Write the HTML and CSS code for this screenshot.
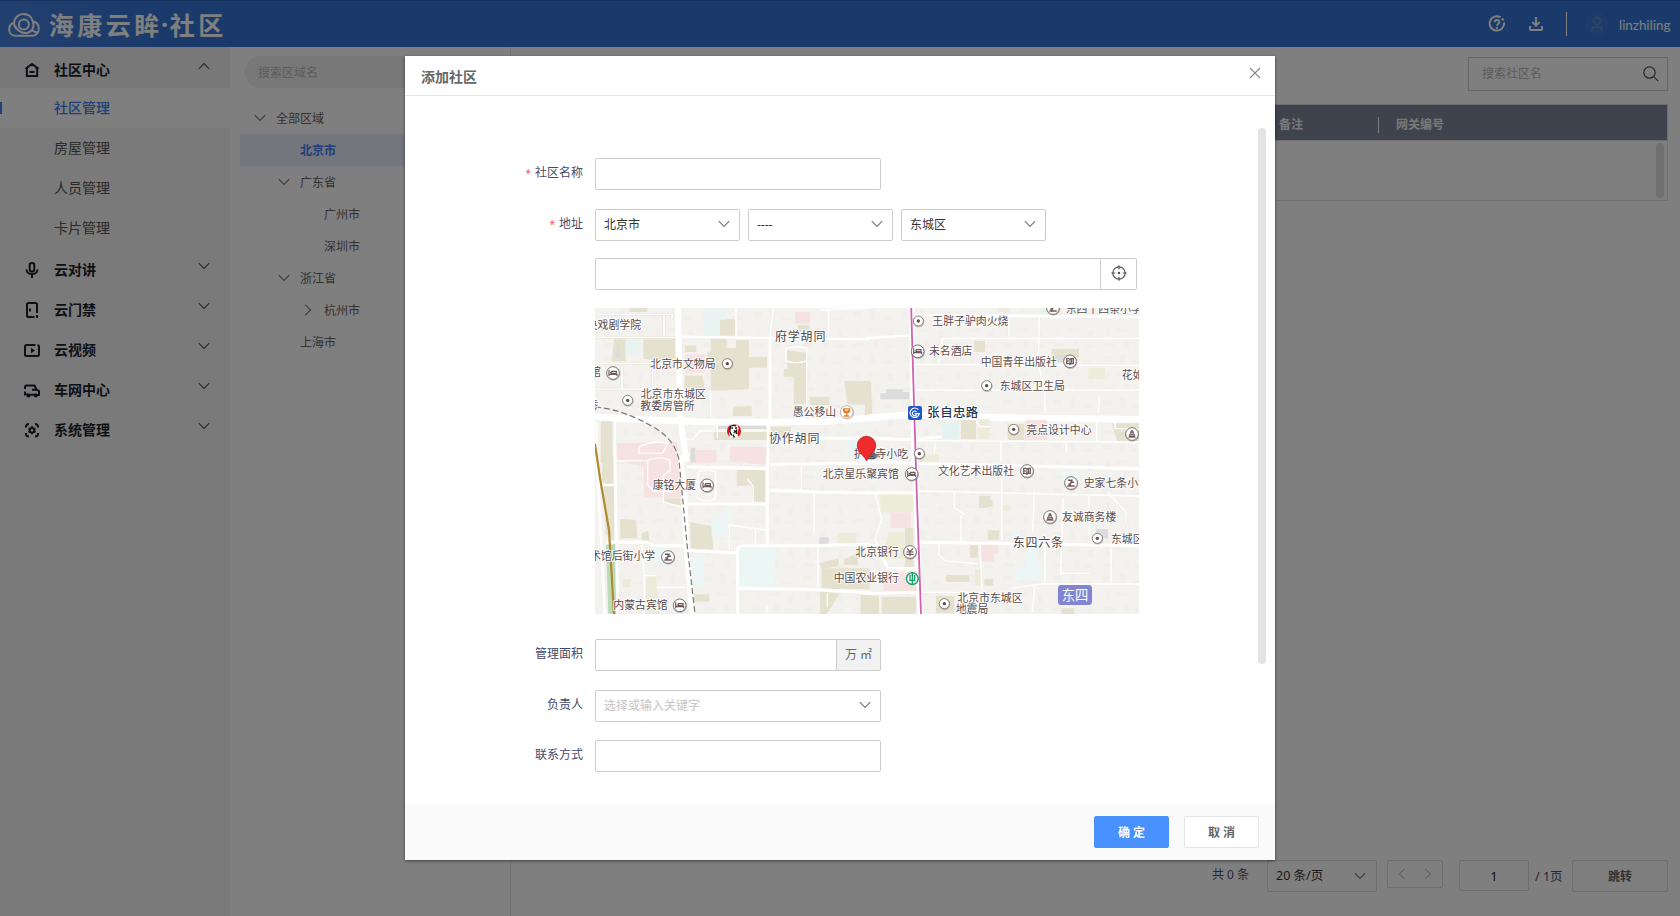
FILE: index.html
```html
<!DOCTYPE html>
<html lang="zh-CN">
<head>
<meta charset="utf-8">
<title>海康云眸·社区</title>
<link rel="stylesheet" href="styles.css">
</head>
<body>
<svg width="0" height="0" class="defs">
  <defs>
    <symbol id="down" viewBox="0 0 12 8"><path d="M.8 1.2 6 6.4l5.2-5.2" fill="none" stroke="currentColor" stroke-width="1.100"/></symbol>
    <symbol id="up" viewBox="0 0 12 8"><path d="M.8 6.8 6 1.6l5.2 5.2" fill="none" stroke="currentColor" stroke-width="1.100"/></symbol>
    <symbol id="right" viewBox="0 0 8 12"><path d="M1.2.8 6.6 6l-5.4 5.2" fill="none" stroke="currentColor" stroke-width="1.100"/></symbol>
    <symbol id="left" viewBox="0 0 8 12"><path d="M6.8.8 1.4 6l5.4 5.2" fill="none" stroke="currentColor" stroke-width="1.100"/></symbol>
  </defs>
</svg>
<div class="app">
  <header class="topbar">
    <div class="brand">
      <svg class="cloud" width="32" height="24" viewBox="0 0 32 24" fill="none" stroke="#fff" stroke-width="2">
        <path d="M7 22.700C3.500 22.700 1.200 20 1.200 16.500 1.200 12.500 3.500 10.500 6 9.800 6.500 4.500 10.500 1.100 15.500 1.100c4.500 0 8 2.700 9.300 7.100 3.800.8 6 3.600 6 7.300 0 4-2.500 7.200-6.300 7.200z"/>
        <circle cx="15.800" cy="11.500" r="5"/>
        <path d="M6 9.800c-.3 4 2.500 6 6 8.600 5 3.300 11.300 1.500 13-3.400.8-2.300.6-4.600-.2-6.800M29.500 19.500q-3.500-.5-5.500-2.500"/>
      </svg>
      <div class="name"><b>海</b><b>康</b><b>云</b><b>眸</b><b class="dot">·</b><b>社</b><b>区</b></div>
    </div>
    <div class="tools">
      <svg width="18" height="18" viewBox="0 0 18 18" fill="none" stroke="#fff" stroke-width="2"><path d="M12.500 2.200A7.200 7.200 0 1 0 16 7.500M14 3.300l1.500 2"/><path d="M6.700 7.200c0-3 4.600-3 4.600 0 0 1.700-2.300 1.600-2.300 3.500M9 12v1.700"/></svg>
      <svg class="dl" width="16" height="16" viewBox="0 0 16 16" fill="none" stroke="#fff" stroke-width="2"><path d="M8 1v8.500M4.300 6 8 9.700 11.700 6M2 10v3q0 1 1 1h10q1 0 1-1v-3"/></svg>
      <i class="rule"></i>
      <span class="avatar"><svg width="14" height="16" viewBox="0 0 14 16" fill="none" stroke="#5f86c4" stroke-width="2"><circle cx="7" cy="5" r="3.400"/><path d="M2 15v-2.500L3.500 11h7l1.500 1.500V15"/></svg></span>
      <span class="user">linzhiling</span>
    </div>
  </header>
  <div class="main">
    <nav class="side">
      <div class="group first"><svg class="ico" viewBox="0 0 16 16"><path d="M4 6.500h-1.200V14h10.400V6.500h-1.500M1.500 6.800 8 2l6.500 4.800M5.500 10h5"/></svg><span>社区中心</span><svg class="chev"><use href="#up"/></svg></div>
      <div class="item active">社区管理</div>
      <div class="item">房屋管理</div>
      <div class="item">人员管理</div>
      <div class="item last">卡片管理</div>
      <div class="group"><svg class="ico" viewBox="0 0 16 16"><rect x="5.700" y="1" width="4.600" height="8.500" rx="2.300"/><path d="M2.500 7.500c0 6 11 6 11 0M8 12v4"/></svg><span>云对讲</span><svg class="chev"><use href="#down"/></svg></div>
      <div class="group"><svg class="ico" viewBox="0 0 16 16"><path d="M10.500 15H4.500Q3 15 3 13.500v-11Q3 1 4.500 1h7Q13 1 13 2.500V11M12 15h1v-2M6 6.500v3"/></svg><span>云门禁</span><svg class="chev"><use href="#down"/></svg></div>
      <div class="group"><svg class="ico" viewBox="0 0 16 16"><path d="M11.500 3H2.500Q1 3 1 4.500v8q0 1.500 1.500 1.500h11q1.500 0 1.500-1.500V4.500q0-1-1.500-1.500"/><path d="m7 5.700 4 2.800-4 2.800z" fill="#1c1f2b" stroke="none"/></svg><span>云视频</span><svg class="chev"><use href="#down"/></svg></div>
      <div class="group"><svg class="ico" viewBox="0 0 16 16"><path d="M1 7V5q0-1.500 1.500-1.500H10.500L12.500 7.500 15 9v4h-2M1 9.500V12.500h3M5 12.700h7M8 7.700h5"/><circle cx="4.500" cy="13.500" r="1.100"/><circle cx="11.800" cy="13.500" r="1.100"/></svg><span>车网中心</span><svg class="chev"><use href="#down"/></svg></div>
      <div class="group"><svg class="ico" viewBox="0 0 16 16"><path d="M1.800 5.500Q1.800 2 5 2M11 2q3.200 0 3.200 3.500M14.200 11q0 3.500-3.200 3.500M5 14.500Q1.800 14.500 1.800 11"/><circle cx="8" cy="8.300" r="2.300"/><path d="M8 4.300v1.500M8 10.800v1.500M4.500 6.300l1.300.8M10.200 9.500l1.300.8M11.500 6.300l-1.300.8M5.800 9.500l-1.300.8"/></svg><span>系统管理</span><svg class="chev"><use href="#down"/></svg></div>
    </nav>
    <aside class="regions">
      <div class="pill">搜索区域名</div>
      <div class="tree">
        <div class="node l0"><svg class="chev"><use href="#down"/></svg><span>全部区域</span></div>
        <div class="node l1 on"><span>北京市</span></div>
        <div class="node l1 open"><svg class="chev"><use href="#down"/></svg><span>广东省</span></div>
        <div class="node l2"><span>广州市</span></div>
        <div class="node l2"><span>深圳市</span></div>
        <div class="node l1 open"><svg class="chev"><use href="#down"/></svg><span>浙江省</span></div>
        <div class="node l2 open"><svg class="chevr"><use href="#right"/></svg><span>杭州市</span></div>
        <div class="node l1"><span>上海市</span></div>
      </div>
    </aside>
    <section class="content">
      <div class="search"><span>搜索社区名</span><svg width="16" height="16" viewBox="0 0 16 16" fill="none" stroke="#555" stroke-width="1.200"><circle cx="6.500" cy="6.500" r="5.700"/><path d="m10.700 10.700 4.500 4.500"/></svg></div>
      <div class="table">
        <div class="thead"><span class="c1">备注</span><span class="c2">网关编号</span></div>
        <div class="tbody"><i class="thumb"></i></div>
      </div>
      <div class="pager">
        <span class="total">共 0 条</span>
        <span class="size">20 条/页<svg class="chev"><use href="#down"/></svg></span>
        <span class="nav"><svg class="chevr"><use href="#left"/></svg><svg class="chevr"><use href="#right"/></svg></span>
        <span class="page">1</span>
        <span class="of">/ 1页</span>
        <span class="jump">跳转</span>
      </div>
    </section>
  </div>
</div>
<div class="mask">
  <div class="modal">
    <div class="mhead"><h1>添加社区</h1><svg width="12" height="12" viewBox="0 0 12 12" fill="none" stroke="#888" stroke-width="1.100"><path d="m1 1 10 10M11 1 1 11"/></svg></div>
    <div class="mbody">
      <div class="form">
        <div class="row r1"><label><em>*</em>社区名称</label><div class="input"></div></div>
        <div class="row r2"><label><em>*</em>地址</label>
          <div class="selects">
            <div class="input sel">北京市<svg class="chev"><use href="#down"/></svg></div>
            <div class="input sel">----<svg class="chev"><use href="#down"/></svg></div>
            <div class="input sel">东城区<svg class="chev"><use href="#down"/></svg></div>
          </div></div>
        <div class="row r3"><label></label><div class="input addr"><span class="locate"><svg width="16" height="16" viewBox="0 0 16 16" fill="none" stroke="#555" stroke-width="1.200"><circle cx="8" cy="8" r="6.200"/><path d="M8 .3v4M8 11.700v4M.3 8h4M11.700 8h4"/><circle cx="8" cy="8" r=".7" fill="#555"/></svg></span></div></div>
        <div class="row r4"><label></label>
<svg class="map" width="544" height="306" viewBox="595 308 544 306">
  <defs>
    <pattern id="tex" width="50" height="44" patternUnits="userSpaceOnUse"><path d="M3 4h9v5H3zM20 2h5v9h-5zM32 9h10v3H32zM6 19h4v9H6zM17 20h12v4H17zM38 22h5v8h-5zM3 35h11v4H3zM24 32h5v7h-5zM35 37h9v3h-9z" fill="#eeedea" opacity=".6"/></pattern>
    <g id="disc"><circle cx="1" cy="2" r="17" fill="#000" opacity=".22"/><circle r="15" fill="#fff" stroke="#8c8080" stroke-width="3"/></g>
    <g id="poi"><use href="#disc"/><circle r="5" fill="#5e4b4b"/></g>
    <g id="ring"><circle cx="1" cy="2" r="21" fill="#000" opacity=".25"/><circle r="19" fill="#fff" stroke="#7f7373" stroke-width="3"/></g>
    <g id="bed"><use href="#ring"/><path d="M-12-9V9M-12 4H12V9M-9-1H-6M-4-5H10V1H-4z" stroke="#6e5858" stroke-width="3.500" fill="none"/></g>
    <g id="sch"><use href="#ring"/><path d="M-9-8H5M2-7-4 8M-11 9H11M1-2H9M-8 3H-3" stroke="#6e5858" stroke-width="4.500" fill="none"/></g>
    <g id="book"><use href="#ring"/><path d="M-10-8H-3L0-5 3-8H10V7H3L0 10-3 7H-10zM0-5V9M5-8V7M-6-3V3" stroke="#6e5858" stroke-width="3.500" fill="none"/></g>
    <g id="tower"><use href="#ring"/><path d="M-12 10H12M-8 9V1H-4V-6L0-12 4-6V1H8V9z" stroke="#6e5858" stroke-width="2" fill="#6e5858"/><path d="M-3-2H3M-5 4H5" stroke="#fff" stroke-width="2"/></g>
  </defs>
  <rect x="595" y="308" width="544" height="306" fill="#f3f2ef"/>
  <rect x="595" y="308" width="544" height="306" fill="url(#tex)"/>
  <g transform="translate(590 300) scale(.33333)">
    <path fill="#e4e2cf" d="M387 57h48v50h-48zM362 117h48v27h28v-24h39v148l-115 4V205l-10-7v-40l10-5zM285 137h34v19h-34zM477 171h54v32h-54zM285 227h52l7 38h-62zM430 320l54-2 2 30h-58zM590 150l60 8 1 155h-40V230h-30v-22h12zM624 75h34v28h-34zM763 243h77v72l-68-3zM660 290h58v25h-58zM32 364h35v125H32zM372 390h160v30H372zM543 380h60v28h-60zM118 24h54v12h-54zM72 118h35v66H65zM160 118h96v70l-96-12z"/>
    <path fill="#f7e2e2" d="M80 430l180-5 8 60H84zM615 36h45v35h-45zM285 163h60v55h-60zM318 450h62v30h-62zM420 440h110v45H420z"/>
    <path fill="#e9f3f1" d="M345 24h65v35h-20v47h-50zM107 117h45v48h-45zM775 420h40v50h-40z"/>
    <path fill="#dcdcdc" d="M77 135h13v40H77zM302 443h14v40h-14zM383 377h150v10H383z"/>
    <g fill="none" stroke="#fff" stroke-width="4"><path d="M438 24v85M550 24l-10 85M715 24v88M362 270v80M650 155v160M588 145q30-10 62 0v38q-30 10-62 0zM285 418h25l18-25h205M382 375v40M148 440q40-20 85-10l-15 30h-70zM690 30l150-6"/></g>
    <g fill="none" stroke="#dcdccb" stroke-width="8"><path d="M15 43h232l-2 12M222 45v60M15 112h245M15 190h260M15 267h250M188 195v70M96 200v65M40 50v60M92 50v60"/></g>
    <g fill="none" stroke="#fff" stroke-width="5"><path d="M15 43h232l-2 12M222 45v60M15 112h245M15 190h260M15 267h250M188 195v70M96 200v65M40 50v60M92 50v60"/></g>
    <g fill="none" stroke="#fff"><path d="M264 24l6 330 20 130" stroke-width="18"/><path d="M540 112v250" stroke-width="9"/><path d="M272 110l568 8" stroke-width="7"/><path d="M15 350l110 8 230 8 350-1 240-20 300 8 462 6" stroke-width="20"/><path d="M534 370v120M540 413l300 3 130 3 120-12" stroke-width="8"/><path d="M75 365v120M20 365v90" stroke-width="6"/></g>
  </g>
  <g transform="translate(590 455) scale(.33333)">
    <path fill="#e4e2cf" d="M38 0h32v90l-35-10zM90 192l48 3 5 55H92zM155 233l20-5 4 32-23-6zM300 201l65 12 5 71-67-3zM440 44h85v98l-37-3-3-48-45 3zM310 418h47v22h-47zM688 325l58-15 1 22-38 8h130v62H695v-60zM762 313l42-18v34h-42zM690 410l60 5-40 62h-20zM812 420h28v57h-28zM40 85h32v175l-25-25zM222 130h50v22l-50-8z"/>
    <path fill="#f7e2e2" d="M80 0h190l3 128H162V36l-80-20zM312 0h68v22l-65 5zM430 0h100v30l-55-5-45-18z"/>
    <path fill="#ecf6f4" d="M447 280l110-5-5 125H447zM365 190l45-5v65l-45-10zM305 305l37 3v90l-40-5zM403 155h22v50h-22zM193 280h50v50h-50z"/>
    <path fill="#bcdbb5" d="M48 270l28-3 2 210H55z"/><path fill="#dcdcdf" d="M688 247h28v22h-28zM302 0h14v22h-14z"/><path fill="#ecebd9" d="M743 233h56v34h-56zM170 360l28 5 10 112h-42zM97 372h25v25H97z"/>
    <g fill="none" stroke="#fff" stroke-width="4"><path d="M80 18l90-2q45-15 70 0v30l-20 15v80l55 15M173 15v75l20 20h55M325 50q25-8 52 0v80q-25 15-55 0zM475 80v-5l15 20v50M415 210l115 15M418 212v75M497 222v45M634 35v70M672 115v120M684 277v120M155 270l8 90v115M165 362h35M200 397h88M530 450v25M712 415v40"/></g>
    <g fill="none" stroke="#fff"><path d="M270 0l14 110 5 170 18 197" stroke-width="17"/><path d="M75 0l8 477M20 0l25 477M18 90h55" stroke-width="8"/><path d="M50 262h123q10 10 22 10h92M300 287l142 6 1 184M442 290q0-16 20-18h180l198-4M532 0v270M290 36l245 5M288 147h240M540 28l300-3M532 105l150 6 160 2M447 400l250 4 145 10" stroke-width="9"/></g>
  </g>
  <g transform="translate(865 300) scale(.33333)">
    <path fill="#e4e2cf" d="M0 246h18l4 95-22 5zM328 122h32v34h-32zM560 147h82v26h-82zM288 360h45v57h-45zM428 372h50v48h-50zM740 370h82v55h-65z"/>
    <path fill="#edecd9" d="M670 205h50v32h-50zM340 358h34v60h-34zM155 463h67v25h-67zM397 24h38v12h-38z"/><path fill="#e6f2f0" d="M232 365h50v53h-50zM523 24h55v18h-55z"/><path fill="#f7e2e2" d="M480 360h66v60h-66z"/><path fill="#dcdcdc" d="M46 280h17v-12h50v8h20v22H46zM560 165h55v22h-55z"/>
    <g fill="none" stroke="#fff" stroke-width="4"><path d="M432 60v48M232 115h590M232 115l-12 78M152 193l670 4M155 270h667M523 45l-3 150 20 75v70M704 290l-5 50M695 362v65M750 365v20l70 3M155 422l667 4M335 365l10 15h30M408 425v60M604 425v30M212 430l-5 30"/></g>
    <g fill="none" stroke="#fff"><path d="M0 114l140-8" stroke-width="7"/><path d="M150 45l672 6" stroke-width="8"/><path d="M139 24l9 465" stroke-width="16"/><path d="M0 412l140 8" stroke-width="8"/></g>
  </g>
  <g transform="translate(865 455) scale(.33333)">
    <path fill="#e4e2cf" d="M342 122h34v14h7v18l-18 5h-23zM368 226h35v28h-35zM315 270h24v38h-24zM243 360h70v21h-70zM358 372h27v20h-27zM213 422h55v52h-55zM120 218h25v118h-25zM50 425h103v52H50zM590 460h38v17h-38zM0 422h42v55H0z"/>
    <path fill="#edecd9" d="M46 117h98v55H46zM412 150h24v17h-24zM330 342h17v50h-17zM70 232h48v80H50z"/><path fill="#f7e2e2" d="M77 172h60v47H77zM345 267h55v30h-13v23h-39zM60 352h95v57H55z"/><path fill="#ecf6f4" d="M480 270h38v58h12v50l-80-2v-40h32zM592 47h50v35h-50z"/><path fill="#dcdcdf" d="M693 222h36v28h-36z"/>
    <g fill="none" stroke="#fff" stroke-width="4"><path d="M160 108l662 15M268 113v45l30 20M288 180v80M410 45v210M508 110l-5 120M595 130l-8 230M672 120v120M222 265v35l20 18 95 8M345 267l6 140M540 265v120l-100 15M585 355h88M540 387h282M170 412h180M510 390l-8 80M30 113l20 80-20 60 25 50M727 110l55 60v30M738 275v110"/></g>
    <g fill="none" stroke="#fff"><path d="M0 20l130 5 692 16M0 113h150M165 262l657 10" stroke-width="9"/><path d="M0 270h30l40 70h85M0 416l155-4" stroke-width="8"/><path d="M150 0l15 477" stroke-width="16"/></g>
  </g>
  <path d="M911.200 308 914.500 420 917 500 921 614" fill="none" stroke="#cf62b0" stroke-width="1.800"/>
  <path d="M595 444 600 478 609 530 614 614" fill="none" stroke="#b08a35" stroke-width="2.200"/>
  <path d="M595 407q28 2 60 21 20 12 24 32l8 84 8 70" fill="none" stroke="#7c7777" stroke-width="1.200" stroke-dasharray="6 3"/>
  <g class="lbl" transform="translate(590 300) scale(.33333)">
    <text x="-10" y="87">央戏剧学院</text><text x="555" y="123" class="road">府学胡同</text><text x="181" y="204">北京市文物局</text><text x="0" y="229">馆</text>
    <text x="152" y="295">北京市东城区</text><text x="151" y="331">教委房管所</text><text x="608" y="347">愚公移山</text><text x="537" y="428" class="road">协作胡同</text>
    <text x="791" y="473">护国寺小吃</text><text x="-12" y="326" class="road">巷</text>
    <use href="#poi" x="412" y="191"/><use href="#bed" x="69" y="219"/><use href="#poi" x="113" y="301"/>
    <circle cx="772" cy="338" r="21" fill="#000" opacity=".15"/><circle cx="770" cy="336" r="19" fill="#fff" stroke="#a39586" stroke-width="2"/><path d="M761 327h18v4q0 8-9 8t-9-8zM770 338v8M762 348h16" fill="#df842a" stroke="#df842a" stroke-width="4"/><path d="M765 330h10" stroke="#fff" stroke-width="3"/>
    <circle cx="432" cy="393" r="21" fill="#d8150f"/><path d="m424 373 18 1 4 12-4 14 3 13h-24l-4-14 3-12z" fill="#fff"/><path d="M424 378q8-4 15 0M424 384h5M435 384h6M422 378l-3 16 6 12M432 391l5 4-6 3M429 404l4 8M440 388l-1 14" fill="none" stroke="#16191a" stroke-width="4"/>
  </g>
  <g class="lbl" transform="translate(590 455) scale(.33333)">
    <text x="188" y="101">康铭大厦</text><text x="0" y="316">术馆后街小学</text><text x="70" y="462">内蒙古宾馆</text><text x="698" y="69">北京星乐聚宾馆</text><text x="796" y="302">北京银行</text><text x="731" y="381">中国农业银行</text>
    <use href="#bed" x="351" y="91"/><use href="#sch" x="234" y="306"/><use href="#bed" x="269" y="451"/>
  </g>
  <g class="lbl" transform="translate(865 300) scale(.33333)">
    <text x="202" y="74">王胖子驴肉火烧</text><text x="192" y="165">未名酒店</text><text x="347" y="197">中国青年出版社</text><text x="404" y="270">东城区卫生局</text><text x="770" y="236">花如</text><text x="187" y="351" class="station">张自忠路</text><text x="484" y="402">亮点设计中心</text><text x="602" y="38">东四十四条小学</text>
    <use href="#poi" x="160" y="63"/><use href="#bed" x="158" y="154"/><use href="#book" x="615" y="184"/><use href="#poi" x="365" y="257"/><use href="#poi" x="446" y="388"/><use href="#tower" x="801" y="402"/><use href="#poi" x="163" y="461"/><use href="#sch" x="564" y="24"/>
    <rect x="129" y="318" width="42" height="42" rx="6" fill="#1f57c5"/><path d="M160 329a14 14 0 1 0 3 12H149M155 336a7 7 0 1 0 0 8" fill="none" stroke="#fff" stroke-width="3.500"/>
  </g>
  <g class="lbl" transform="translate(865 455) scale(.33333)">
    <text x="219" y="59">文化艺术出版社</text><text x="656" y="95">史家七条小学</text><text x="591" y="198">友诚商务楼</text><text x="738" y="263">东城区</text><text x="443" y="275" class="road">东四六条</text><text x="277" y="440">北京市东城区</text><text x="272" y="475">地震局</text>
    <use href="#bed" x="140" y="57"/><use href="#book" x="486" y="48"/><use href="#sch" x="618" y="84"/><use href="#tower" x="555" y="186"/><use href="#poi" x="697" y="250"/><use href="#poi" x="238" y="446"/>
    <use href="#ring" x="135" y="291"/><path d="M126 280l9 10 9-10M135 290v14M124 291h22M124 298h22" stroke="#6e5858" stroke-width="3.500" fill="none"/>
    <circle cx="142" cy="371" r="17.500" fill="#fff" stroke="#17a26b" stroke-width="4.500"/><path d="M142 352v36M135 360v16h14v-16M139 361h6" stroke="#17a26b" stroke-width="4" fill="none"/>
    <rect x="579" y="390" width="102" height="60" rx="10" fill="#8286d2"/><text x="590" y="435" class="area">东四</text>
  </g>
  <ellipse cx="871" cy="456" rx="7" ry="3.500" fill="#333" opacity=".6"/>
  <path d="M866.500 461c-1.500-5-9.200-8.500-9.200-15.500a9.200 9.200 0 0 1 18.400 0c0 7-7.700 10.500-9.200 15.500z" fill="#f02a2d" stroke="#b61f25" stroke-width=".8"/>
</svg></div>
        <div class="row r5"><label>管理面积</label><div class="input"><span class="unit">万 ㎡</span></div></div>
        <div class="row r6"><label>负责人</label><div class="input sel ph">选择或输入关键字<svg class="chev"><use href="#down"/></svg></div></div>
        <div class="row r7"><label>联系方式</label><div class="input"></div></div>
      </div>
      <i class="thumb"></i>
    </div>
    <div class="mfoot"><span class="btn ok">确 定</span><span class="btn">取 消</span></div>
  </div>
</div>
</body>
</html>
```

FILE: styles.css
```css
* { box-sizing: border-box; }
body { margin: 0; width: 1680px; height: 916px; overflow: hidden; position: relative; font: 12px/20px "Noto Sans", "Noto Sans CJK SC", sans-serif; color: #666; }
svg { display: block; flex: none; }
i, em { font-style: normal; }
.defs { position: absolute; }
.chev { width: 12px; height: 8px; color: #777; }
.chevr { width: 8px; height: 12px; color: #777; }

.app { height: 916px; display: flex; flex-direction: column; background: #fff; }
.topbar { height: 47px; flex: none; display: flex; justify-content: space-between; background: linear-gradient(90deg, #4480df 0, #3474d6 170px, #3474d6 100%); border-top: 1px solid #2b64bd; }
.brand { display: flex; padding: 12px 0 0 8px; }
.name { display: flex; margin: -1px 0 0 7px; font-size: 25px; line-height: 24px; color: #fff; }
.name b { width: 28.500px; font-weight: 700; text-align: center; font-family: "Noto Sans CJK SC", sans-serif; }
.name .dot { width: 7px; font-family: "Noto Sans", sans-serif; }
.tools { display: flex; align-items: center; padding-right: 9px; color: #fff; }
.dl { margin-left: 22px; }
.rule { width: 1px; height: 24px; margin-left: 22px; background: #fff; }
.avatar { width: 24px; height: 24px; margin: 0 10px 0 18px; border-radius: 50%; background: #3a78d8; display: flex; align-items: center; justify-content: center; }
.user { width: 52px; font: 13.400px/20px Lato, sans-serif; padding-top: 1px; white-space: nowrap; }

.main { flex: 1; display: flex; }
.side { width: 230px; flex: none; background: #f4f4f4; font-size: 14px; }
.group { height: 40px; display: flex; align-items: center; padding: 0 20px 0 24px; color: #1c1f2b; font-weight: 700; }
.group.first { height: 41px; padding-top: 5px; background: #f0f0f0; }
.group span { flex: 1; margin-left: 14px; }
.group .chev { margin-top: -8px; color: #555; }
.ico { width: 16px; height: 16px; fill: none; stroke: #1c1f2b; stroke-width: 2; }
.item { height: 40px; line-height: 40px; padding-left: 54px; color: #555; }
.item.active { background: linear-gradient(#3f83f0, #3f83f0) 0 14px / 2px 12px no-repeat #fff; color: #3f7fec; font-weight: 500; }
.item.last { margin-bottom: 2px; }

.regions { width: 281px; flex: none; border-right: 1px solid #e6e6e6; padding: 9px 0 0 10px; }
.pill { height: 32px; margin-left: 5px; padding-left: 13px; line-height: 33px; border-radius: 16px; background: #f0f0f0; color: #b8b8b8; }
.tree { margin-top: 14px; }
.node { height: 32px; display: flex; align-items: center; }
.node span { padding-top: 2px; }
.l0 { padding-left: 14px; }
.l0 .chev { margin-right: 10px; }
.l1 { padding-left: 60px; }
.l1.open { padding-left: 38px; }
.l1 .chev { margin-right: 10px; }
.l2 { padding-left: 84px; }
.l2.open { padding-left: 64px; }
.l2 .chevr { margin-right: 12px; }
.node.on { background: #e7ecfb; color: #3f7fec; font-weight: 700; }

.content { flex: 1; display: flex; flex-direction: column; padding: 10px 12px 24px 20px; }
.search { width: 200px; height: 34px; align-self: flex-end; border: 1px solid #ccc; display: flex; align-items: center; justify-content: space-between; padding: 0 8px 0 13px; color: #b8b8b8; }
.table { margin-top: 13px; border: 1px solid #dcdcdc; }
.thead { height: 35px; display: flex; align-items: center; background: #7f869b; color: #f2f2f2; font-weight: 700; padding: 4px 0 0 747px; }
.c1 { width: 99px; }
.c2 { line-height: 16px; border-left: 1px solid #fff; padding-left: 17px; }
.tbody { height: 60px; padding: 2px 3px; display: flex; justify-content: flex-end; border-top: 1px solid #ddd; }
.tbody .thumb { width: 8px; height: 55px; border-radius: 4px; background: #e0e0e0; }
.pager { margin-top: auto; height: 32px; display: flex; align-items: flex-start; justify-content: flex-end; }
.pager span { border-radius: 2px; }
.total { line-height: 30px; margin-right: 16px; width: 39px; white-space: nowrap; color: #4c5068; }
.size, .nav, .page, .jump { border: 1px solid #dcdcdc; display: flex; align-items: center; }
.size { width: 110px; height: 32px; padding: 0 10px 0 8px; font-size: 12.500px; justify-content: space-between; color: #333; }
.nav { width: 56px; height: 28px; margin-left: 10px; justify-content: space-between; padding: 0 10px; }
.nav .chevr { color: #ccc; }
.page { width: 70px; height: 31px; margin-left: 16px; justify-content: center; font-size: 13px; color: #222; }
.of { width: 27px; margin: 0 10px 0 6px; font-size: 12.500px; line-height: 34px; white-space: nowrap; color: #4c5068; }
.jump { width: 96px; height: 32px; padding-top: 1px; justify-content: center; font-weight: 700; }

.mask { position: absolute; inset: 0; background: rgba(0,0,0,.5); padding: 56px 0 0 405px; }
.modal { width: 870px; height: 804px; background: #fff; display: flex; flex-direction: column; box-shadow: 0 1px 3px rgba(0,0,0,.5); }
.mhead { height: 40px; display: flex; justify-content: space-between; padding: 11px 14px 0 16px; border-bottom: 1px solid #e6e6e6; }
.mhead h1 { margin: 0; font-size: 14px; line-height: 20px; font-weight: 700; color: #666; }
.mbody { flex: 1; display: flex; justify-content: space-between; padding-right: 9px; }
.mbody > .thumb { width: 8px; height: 536px; margin-top: 32px; border-radius: 4px; background: #e4e4e4; }
.form { padding: 62px 0 0 60px; }
.row { display: flex; height: 32px; }
.row label { width: 118px; margin-right: 12px; text-align: right; line-height: 30px; color: #464a69; }
.row em { color: #f55; font-size: 10px; margin-right: 4px; }
.input { position: relative; width: 286px; height: 32px; border: 1px solid #ccc; border-radius: 2px; display: flex; justify-content: space-between; align-items: center; color: #333; }
.r2 { margin-top: 19px; }
.selects { display: flex; gap: 8px; }
.sel { width: 145px; padding: 0 9px 0 8px; }
.sel .chev { margin-top: -2px; }
.r3 { margin-top: 17px; }
.addr { width: 542px; justify-content: flex-end; }
.locate { width: 36px; height: 30px; padding-bottom: 2px; border-left: 1px solid #ccc; display: flex; align-items: center; justify-content: center; }
.r4 { margin-top: 18px; height: 306px; }
.r5 { margin-top: 25px; }
.r5 .input { justify-content: flex-end; }
.unit { width: 44px; height: 30px; line-height: 30px; text-align: center; background: #f2f2f2; border-left: 1px solid #ccc; color: #666; }
.r6 { margin-top: 19px; }
.r6 .sel { width: 286px; }
.input.ph { color: #c4c4c4; }
.r7 { margin-top: 18px; }
.mfoot { height: 56px; display: flex; justify-content: flex-end; gap: 15px; padding: 12px 16px; background: #fafafa; }
.btn { width: 75px; height: 32px; line-height: 31px; text-align: center; border: 1px solid #e4e4e4; border-radius: 2px; background: #fff; color: #666; font-weight: 700; }
.btn.ok { background: #4891ff; border-color: #4891ff; color: #fff; }

.lbl text { font: 32.700px "Noto Sans CJK SC", sans-serif; fill: #594c4c; stroke: #fff; stroke-width: 6px; stroke-opacity: .85; paint-order: stroke; stroke-linejoin: round; }
.lbl .road { font-size: 36px; letter-spacing: 2.500px; fill: #4c4848; }
.lbl .station { font-size: 37px; letter-spacing: 1.500px; fill: #1c3857; font-weight: 500; }
.lbl .area { font-size: 40px; fill: #fff; stroke: none; }
```
